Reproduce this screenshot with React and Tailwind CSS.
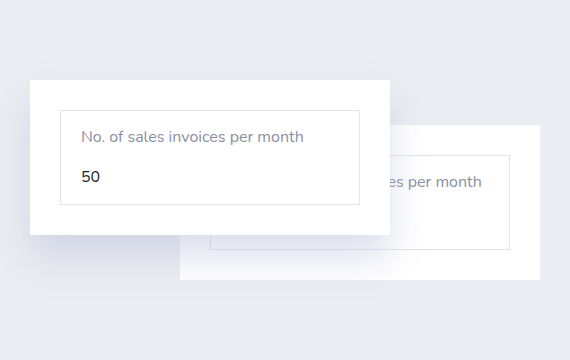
export default function App() {
  const font = { fontFamily: '"Nunito", "Noto Sans", "Open Sans", sans-serif' };
  const Card = ({ label, value, extra }) => (
    <div className={`col-start-1 row-start-1 w-[360px] h-[155px] bg-white p-[30px] ${extra}`}>
      <div className="h-[95px] border border-[#e3e4ea] pl-[20px] pt-[15px]">
        <div className="text-[16px] leading-[22px] text-[#8b8fa1]">{label}</div>
        <div className="mt-[19px] text-[16px] leading-[20px] text-[#1c1f2b]">{value}</div>
      </div>
    </div>
  );
  return (
    <div className="w-[570px] h-[360px] bg-[#ecedf2] pt-[80px] pl-[30px]" style={font}>
      <div className="grid w-max">
        <Card label="No. of purchase invoices per month" value="20" extra="ml-[150px] mt-[45px]" />
        <Card
          label="No. of sales invoices per month"
          value="50"
          extra="relative z-10 shadow-[0_22px_34px_rgba(180,185,215,0.45)]"
        />
      </div>
    </div>
  );
}
